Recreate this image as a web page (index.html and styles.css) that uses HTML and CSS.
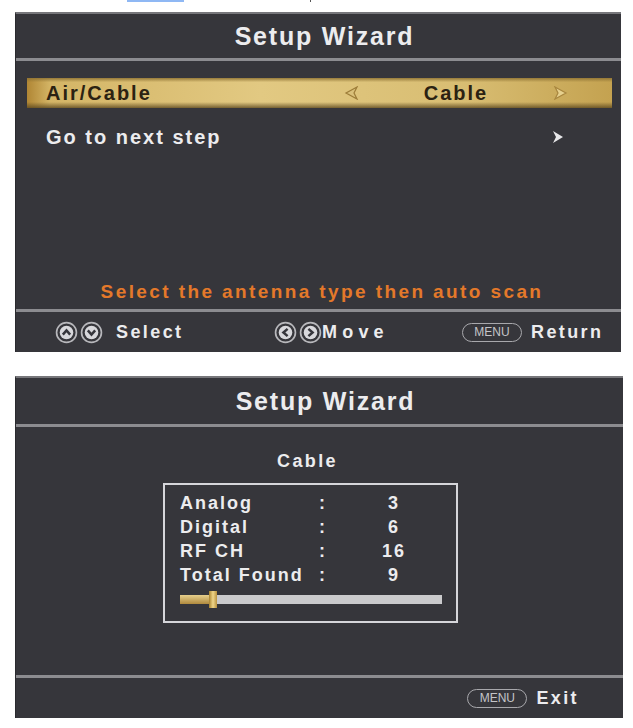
FILE: index.html
```html
<!DOCTYPE html>
<html lang="en">
<head>
  <meta charset="UTF-8">
  <title>Setup Wizard</title>
  <meta name="viewport" content="width=device-width,initial-scale=1">
  <link rel="stylesheet" href="styles.css">
</head>
<body>
  <div class="topstrip"><span class="hilite"></span><span class="tick"></span></div>

  <!-- screen 1: antenna type -->
  <div class="osd osd-select">
    <div class="osd-head">Setup Wizard</div>
    <div class="osd-body">
      <div class="opt opt-active">
        <span class="opt-label">Air/Cable</span>
        <span class="opt-value">
          <svg class="arr" width="16" height="14" viewBox="0 0 16 14"><polygon points="13,1 2,7 13,13 10,7" fill="#d9c07a" stroke="#9c7c38" stroke-width="1.2"/></svg>
          <span class="val">Cable</span>
          <svg class="arr" width="16" height="14" viewBox="0 0 16 14"><polygon points="3,1 14,7 3,13 6,7" fill="#e6d08e" stroke="#a8863e" stroke-width="1.2"/></svg>
        </span>
      </div>
      <div class="opt">
        <span class="opt-label">Go to next step</span>
        <svg class="chev" width="12" height="14" viewBox="0 0 12 14"><polygon points="1,1 11,7 1,13 4,7" fill="#e8e8ea"/></svg>
      </div>
      <div class="hint">Select the antenna type then auto scan</div>
    </div>
    <div class="osd-foot foot-3">
      <div class="key">
        <span class="btns">
          <svg width="23" height="23" viewBox="0 0 22 22"><circle cx="11" cy="11" r="9.5" fill="none" stroke="#b8b8bc" stroke-width="1.6"/><circle cx="11" cy="11" r="6.5" fill="#d8d8dc"/><polyline points="7.5,13 11,9 14.5,13" fill="none" stroke="#36363c" stroke-width="2.4"/></svg>
          <svg width="23" height="23" viewBox="0 0 22 22"><circle cx="11" cy="11" r="9.5" fill="none" stroke="#b8b8bc" stroke-width="1.6"/><circle cx="11" cy="11" r="6.5" fill="#d8d8dc"/><polyline points="7.5,9 11,13 14.5,9" fill="none" stroke="#36363c" stroke-width="2.4"/></svg>
        </span>
        <span class="key-txt">Select</span>
      </div>
      <div class="key">
        <span class="btns">
          <svg width="23" height="23" viewBox="0 0 22 22"><circle cx="11" cy="11" r="9.5" fill="none" stroke="#b8b8bc" stroke-width="1.6"/><circle cx="11" cy="11" r="6.5" fill="#d8d8dc"/><polyline points="13,7.5 9,11 13,14.5" fill="none" stroke="#36363c" stroke-width="2.4"/></svg>
          <svg width="23" height="23" viewBox="0 0 22 22"><circle cx="11" cy="11" r="9.5" fill="none" stroke="#b8b8bc" stroke-width="1.6"/><circle cx="11" cy="11" r="6.5" fill="#d8d8dc"/><polyline points="9,7.5 13,11 9,14.5" fill="none" stroke="#36363c" stroke-width="2.4"/></svg>
        </span>
        <span class="key-txt tight">Move</span>
      </div>
      <div class="key">
        <span class="menu-pill">MENU</span>
        <span class="key-txt">Return</span>
      </div>
    </div>
  </div>

  <!-- screen 2: scan result -->
  <div class="osd osd-scan">
    <div class="osd-head">Setup Wizard</div>
    <div class="osd-body scan-body">
      <div class="scan-title">Cable</div>
      <div class="scan-box">
        <div class="scan-grid">
          <span>Analog</span><span>:</span><span class="num">3</span>
          <span>Digital</span><span>:</span><span class="num">6</span>
          <span>RF CH</span><span>:</span><span class="num">16</span>
          <span>Total Found</span><span>:</span><span class="num">9</span>
        </div>
        <div class="progress">
          <div class="progress-fill" style="width: 13%"></div>
          <div class="progress-thumb"></div>
        </div>
      </div>
    </div>
    <div class="osd-foot foot-end">
      <div class="key">
        <span class="menu-pill">MENU</span>
        <span class="key-txt">Exit</span>
      </div>
    </div>
  </div>
</body>
</html>
```

FILE: styles.css
```css
body { margin: 0; background: #fff; font-family: "Liberation Sans", Arial, sans-serif; font-weight: bold; }

.topstrip { height: 12px; position: relative; }
.hilite { position: absolute; left: 127px; top: 0; width: 57px; height: 2px; background: #8fb8f4; }
.tick { position: absolute; left: 310px; top: 0; width: 1px; height: 2px; background: #555; }

.osd { margin-left: 15px; background: #36363b; border-top: 2px solid #77777b; border-left: 1px solid #2a2a2e; display: flex; flex-direction: column; box-sizing: border-box; }
.osd-select { width: 606px; height: 340px; }
.osd-scan { width: 608px; height: 342px; margin-top: 24px; }

.osd-head { height: 44px; line-height: 44px; padding-left: 12px; text-align: center; color: #ececee; font-size: 25px; letter-spacing: 1.8px; border-bottom: 3px solid #8c8c90; }
.osd-scan .osd-head { height: 46px; line-height: 46px; }

.osd-body { flex: 1; display: flex; flex-direction: column; padding: 17px 9px 0 11px; }

.opt { height: 30px; display: flex; align-items: center; padding: 0 0 0 19px; font-size: 20px; letter-spacing: 2px; color: #ececee; }
.opt + .opt { margin-top: 14px; }
.opt .chev { margin-left: auto; margin-right: 48px; }
.opt-active { color: #2b2212; background-image: linear-gradient(to bottom, rgba(143,115,51,0.9) 0%, rgba(233,214,156,0) 14%, rgba(0,0,0,0) 80%, rgba(90,70,30,0.8) 100%), linear-gradient(to right, #b08634 0%, #d4b566 4%, #e2c982 40%, #d8bd72 75%, #c4a250 100%); }
.opt-value { margin-left: auto; display: flex; align-items: center; margin-right: 44px; }
.opt-value .val { width: 192px; text-align: center; }
.opt-value .arr { display: block; }

.hint { margin-top: auto; margin-bottom: 5px; padding-left: 5px; text-align: center; color: #e4792a; font-size: 19px; letter-spacing: 2.4px; line-height: 24px; }

.osd-foot { height: 40px; border-top: 3px solid #8c8c90; display: flex; align-items: center; color: #ececee; font-size: 18px; letter-spacing: 2.4px; }
.foot-3 { display: grid; grid-template-columns: 219px 188px auto; padding-left: 39px; }
.foot-end { justify-content: flex-end; padding-right: 44px; height: 40px; }

.key { display: flex; align-items: center; }
.btns { display: flex; gap: 2px; margin-right: 13px; }
.btns svg { display: block; }
.key-txt.tight { margin-left: -13px; letter-spacing: 5.2px; }
.menu-pill { width: 60px; height: 19px; box-sizing: border-box; border: 1.5px solid #a8a8ac; border-radius: 10px; color: #c4c4c8; font-size: 12px; font-weight: normal; letter-spacing: 0; text-align: center; line-height: 16px; margin-right: 9px; font-family: "Liberation Sans Narrow", "Liberation Sans", sans-serif; }

.scan-body { padding: 22px 0 0 0; align-items: flex-start; }
.scan-title { width: 100%; box-sizing: border-box; padding-right: 24px; text-align: center; color: #ececee; font-size: 18px; letter-spacing: 2.4px; line-height: 24px; }
.scan-box { margin: 10px 0 0 147px; width: 295px; height: 140px; box-sizing: border-box; border: 2px solid #d6d6da; padding: 6px 0 0 15px; }
.scan-grid { display: grid; grid-template-columns: 139px 30px 90px; color: #ececee; font-size: 18px; letter-spacing: 2px; line-height: 24px; }
.scan-grid .num { text-align: center; }

.progress { position: relative; width: 262px; height: 9px; margin-top: 8px; background: #cacacc; }
.progress-fill { height: 100%; background: linear-gradient(to bottom, #e6cf8c, #b08a3e); }
.progress-thumb { position: absolute; left: 29px; top: -4px; width: 8px; height: 17px; background: linear-gradient(to right, #a8822e, #f0d68a, #b8913e); }
```
